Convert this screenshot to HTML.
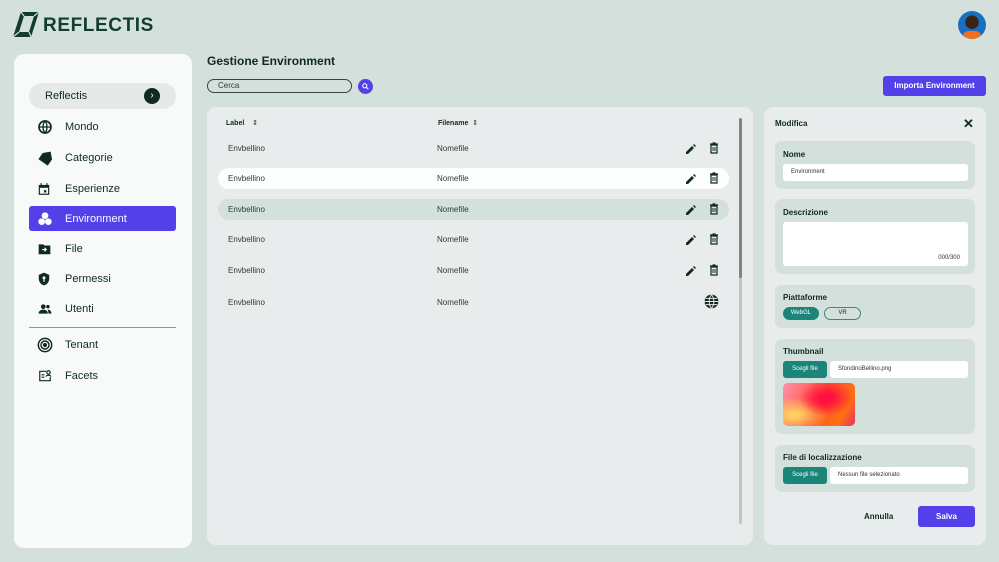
<!DOCTYPE html><html><head><meta charset="utf-8"><style>
*{box-sizing:border-box;margin:0;padding:0}
body{width:999px;height:562px;background:#d4e0db;font-family:"Liberation Sans",sans-serif;color:#0f2a20;position:relative;overflow:hidden}
.a{position:absolute}
.nav{position:absolute;left:29px;width:147px;height:25px;font-size:11px;display:flex;align-items:center}
.nav svg{position:absolute;left:8px}
.nav span{position:absolute;left:36px}
.row{position:absolute;left:218px;width:511px;height:21px;border-radius:11px;font-size:8px;color:#2a3d35;line-height:21px}
.row .l{position:absolute;left:10px}.row .f{position:absolute;left:219px}
.sec{position:absolute;left:775px;width:200px;background:#d4e0db;border-radius:7px}
.sec b{position:absolute;left:8px;font-size:8px}
.inp{position:absolute;left:8px;width:185px;background:#fff;border-radius:3px;font-size:6px;color:#333}
.btn{position:absolute;background:#1a8578;color:#fff;font-size:6px;border-radius:3px;text-align:center}
</style></head><body>
<svg class="a" style="left:13px;top:12px" width="26" height="25" viewBox="0 0 26 25"><path d="M8 0H26L18 25H0Z" fill="#123d2d"/><path d="M11 4H21L16 20H6Z" fill="#d4e0db"/><path d="M8 0L11 4M26 0L21 4M18 25L16 20M0 25L6 20" stroke="#d4e0db" stroke-width="1.2"/></svg>
<div class="a" style="left:43px;top:15px;font-size:19px;font-weight:bold;letter-spacing:0.6px;color:#123d2d">REFLECTIS</div>
<div class="a" style="left:958px;top:11px;width:28px;height:28px;border-radius:50%;background:radial-gradient(circle at 50% 40%,#3a2418 30%,#1a6fc4 32%);overflow:hidden"><div class="a" style="left:5px;top:20px;width:18px;height:10px;background:#f07020;border-radius:5px"></div></div>

<div class="a" style="left:14px;top:54px;width:178px;height:494px;background:#f8faf9;border-radius:10px"></div>
<div class="a" style="left:29px;top:83px;width:147px;height:26px;background:#e5e9e9;border-radius:13px;font-size:11px;line-height:26px"><span class="a" style="left:16px;top:0">Reflectis</span><div class="a" style="left:115px;top:5px;width:16px;height:16px;border-radius:50%;background:#0f2a20;color:#fff;font-size:10px;text-align:center;line-height:15px">›</div></div>
<div class="nav" style="top:114px"><svg width="16" height="16" viewBox="0 0 24 24"><circle cx="12" cy="12" r="9" fill="none" stroke="#0f2a20" stroke-width="2.5"/><path d="M3 12h18M12 3c-4 5-4 13 0 18M12 3c4 5 4 13 0 18" stroke="#0f2a20" stroke-width="2" fill="none"/></svg><span>Mondo</span></div>
<div class="nav" style="top:145px"><svg width="16" height="16" viewBox="0 0 24 24"><path d="M2 12L10 4h12v12l-8 8z" fill="#0f2a20" transform="rotate(-10 12 12)"/></svg><span>Categorie</span></div>
<div class="nav" style="top:176px"><svg width="14" height="14" viewBox="0 0 24 24"><path d="M3 5h18v17H3z" fill="#0f2a20"/><rect x="5" y="10" width="14" height="10" fill="#f8faf9"/><rect x="12" y="14" width="4" height="4" fill="#0f2a20"/><path d="M7 2v4M17 2v4" stroke="#0f2a20" stroke-width="2"/></svg><span>Esperienze</span></div>
<div class="nav" style="top:206px;background:#5340e8;border-radius:3px;color:#fff"><svg width="16" height="16" viewBox="0 0 24 24" fill="#fff"><circle cx="12" cy="7" r="5"/><circle cx="7" cy="16" r="5"/><circle cx="17" cy="16" r="5"/></svg><span>Environment</span></div>
<div class="nav" style="top:236px"><svg width="15" height="14" viewBox="0 0 24 24"><path d="M2 4h8l2 2h10v15H2z" fill="#0f2a20"/><path d="M8 13h7M12 10l3 3-3 3" stroke="#f8faf9" stroke-width="2" fill="none"/></svg><span>File</span></div>
<div class="nav" style="top:266px"><svg width="14" height="16" viewBox="0 0 24 24"><path d="M12 1L3 5v6c0 6 4 11 9 12 5-1 9-6 9-12V5z" fill="#0f2a20"/><circle cx="12" cy="10" r="2.5" fill="#f8faf9"/><path d="M12 12v5" stroke="#f8faf9" stroke-width="2"/></svg><span>Permessi</span></div>
<div class="nav" style="top:296px"><svg width="16" height="14" viewBox="0 0 24 24" fill="#0f2a20"><circle cx="9" cy="8" r="4"/><circle cx="17" cy="8" r="3"/><path d="M1 20c0-5 4-7 8-7s8 2 8 7zM17 13c3 0 6 2 6 7h-5c0-3-1-5-1-7z"/></svg><span>Utenti</span></div>
<div class="a" style="left:29px;top:327px;width:147px;height:1px;background:#8a9a95"></div>
<div class="nav" style="top:332px"><svg width="16" height="16" viewBox="0 0 24 24" fill="none" stroke="#0f2a20" stroke-width="2.2"><circle cx="12" cy="12" r="10"/><circle cx="12" cy="12" r="6"/><circle cx="12" cy="12" r="2" fill="#0f2a20"/></svg><span>Tenant</span></div>
<div class="nav" style="top:363px"><svg width="16" height="14" viewBox="0 0 24 24" fill="none" stroke="#0f2a20" stroke-width="2"><path d="M14 4H3v16h18v-6"/><path d="M6 10h5M6 14h5"/><circle cx="18" cy="6" r="3"/><path d="M14 13c0-3 8-3 8 0"/></svg><span>Facets</span></div>

<div class="a" style="left:207px;top:54px;font-size:12px;font-weight:bold">Gestione Environment</div>
<div class="a" style="left:207px;top:79px;width:145px;height:14px;border:1px solid #33483f;border-radius:7px;font-size:8px;line-height:12px;padding:0 10px;color:#2a3d35">Cerca</div>
<div class="a" style="left:358px;top:79px;width:15px;height:15px;border-radius:50%;background:#5340e8"><svg class="a" style="left:4px;top:4px" width="7" height="7" viewBox="0 0 10 10" fill="none" stroke="#fff" stroke-width="1.5"><circle cx="4" cy="4" r="3"/><path d="M6 6l3 3"/></svg></div>
<div class="a" style="left:883px;top:76px;width:103px;height:20px;background:#5340e8;border-radius:3px;color:#fff;font-size:8px;font-weight:bold;text-align:center;line-height:20px">Importa Environment</div>

<div class="a" style="left:207px;top:107px;width:546px;height:438px;background:#e8ecec;border-radius:9px"></div>
<div class="a" style="left:739px;top:118px;width:3px;height:406px;background:#bfc6c4;border-radius:2px"><div style="height:160px;background:#7f8785;border-radius:2px"></div></div>
<div class="a" style="left:226px;top:119px;font-size:7px;font-weight:bold">Label &nbsp;&nbsp; <span style="font-weight:normal">⇕</span></div>
<div class="a" style="left:438px;top:119px;font-size:7px;font-weight:bold">Filename &nbsp;<span style="font-weight:normal">⇕</span></div>

<div class="row" style="top:138px"><span class="l">Envbellino</span><span class="f">Nomefile</span></div>
<div class="row" style="top:168px;background:#fdfefe"><span class="l">Envbellino</span><span class="f">Nomefile</span></div>
<div class="row" style="top:199px;background:#d4e0db"><span class="l">Envbellino</span><span class="f">Nomefile</span></div>
<div class="row" style="top:229px"><span class="l">Envbellino</span><span class="f">Nomefile</span></div>
<div class="row" style="top:260px"><span class="l">Envbellino</span><span class="f">Nomefile</span></div>
<div class="row" style="top:292px"><span class="l">Envbellino</span><span class="f">Nomefile</span></div>

<svg width="0" height="0" style="position:absolute"><defs>
<g id="ed"><path d="M1 9L1 11 3 11 9 5 7 3zM8 2l2 2 1-1-2-2z" fill="#0f2a20"/></g>
<g id="tr"><path d="M2 2h8M4.5 1h3M3 3h6v8H3z" stroke="#0f2a20" stroke-width="1.2" fill="none"/><path d="M5 5v4M7 5v4" stroke="#0f2a20" stroke-width="1"/></g></defs></svg>
<svg class="a" style="left:685px;top:143px" width="12" height="12"><use href="#ed"/></svg><svg class="a" style="left:708px;top:142px" width="12" height="12"><use href="#tr"/></svg>
<svg class="a" style="left:685px;top:173px" width="12" height="12"><use href="#ed"/></svg><svg class="a" style="left:708px;top:172px" width="12" height="12"><use href="#tr"/></svg>
<svg class="a" style="left:685px;top:204px" width="12" height="12"><use href="#ed"/></svg><svg class="a" style="left:708px;top:203px" width="12" height="12"><use href="#tr"/></svg>
<svg class="a" style="left:685px;top:234px" width="12" height="12"><use href="#ed"/></svg><svg class="a" style="left:708px;top:233px" width="12" height="12"><use href="#tr"/></svg>
<svg class="a" style="left:685px;top:265px" width="12" height="12"><use href="#ed"/></svg><svg class="a" style="left:708px;top:264px" width="12" height="12"><use href="#tr"/></svg>
<svg class="a" style="left:704px;top:294px" width="15" height="15" viewBox="0 0 24 24"><circle cx="12" cy="12" r="11" fill="#0f2a20"/><path d="M1 12h22M12 1c-5 6-5 16 0 22M12 1c5 6 5 16 0 22M3 7h18M3 17h18" stroke="#e8ecec" stroke-width="1.5" fill="none"/></svg>

<div class="a" style="left:764px;top:107px;width:222px;height:438px;background:#e8ecec;border-radius:9px"></div>
<div class="a" style="left:775px;top:119px;font-size:8px;font-weight:bold">Modifica</div>
<div class="a" style="left:963px;top:116px;font-size:13px;font-weight:bold">✕</div>
<div class="sec" style="top:141px;height:48px"><b style="top:9px">Nome</b><div class="inp" style="top:23px;height:17px;line-height:17px;padding:0 8px">Environment</div></div>
<div class="sec" style="top:199px;height:75px"><b style="top:9px">Descrizione</b><div class="inp" style="top:23px;height:44px"><span class="a" style="right:8px;bottom:5px">000/300</span></div></div>
<div class="sec" style="top:285px;height:43px"><b style="top:8px">Piattaforme</b><div class="a" style="left:8px;top:22px;width:36px;height:13px;border-radius:7px;background:#1a8578;color:#fff;font-size:6px;text-align:center;line-height:13px">WebGL</div><div class="a" style="left:49px;top:22px;width:37px;height:13px;border-radius:7px;border:1px solid #3a8a80;font-size:6px;text-align:center;line-height:11px">VR</div></div>
<div class="sec" style="top:339px;height:95px"><b style="top:8px">Thumbnail</b><div class="btn" style="left:8px;top:22px;width:44px;height:17px;line-height:17px">Scegli file</div><div class="inp" style="left:55px;width:138px;top:22px;height:17px;line-height:17px;padding:0 8px">SfondinoBellino.png</div><div class="a" style="left:8px;top:44px;width:72px;height:43px;border-radius:5px;background:radial-gradient(ellipse at 60% 35%,#ff1040 10%,transparent 45%),radial-gradient(ellipse at 15% 75%,#ffd060 5%,transparent 40%),linear-gradient(120deg,#ff90b0,#ff5030 50%,#ff7010 80%,#e83060)"></div></div>
<div class="sec" style="top:445px;height:47px"><b style="top:8px">File di localizzazione</b><div class="btn" style="left:8px;top:22px;width:44px;height:17px;line-height:17px">Scegli file</div><div class="inp" style="left:55px;width:138px;top:22px;height:17px;line-height:17px;padding:0 8px">Nessun file selezionato</div></div>
<div class="a" style="left:864px;top:512px;font-size:8px;font-weight:bold">Annulla</div>
<div class="a" style="left:918px;top:506px;width:57px;height:21px;background:#5340e8;border-radius:3px;color:#fff;font-size:8px;font-weight:bold;text-align:center;line-height:21px">Salva</div>
</body></html>
